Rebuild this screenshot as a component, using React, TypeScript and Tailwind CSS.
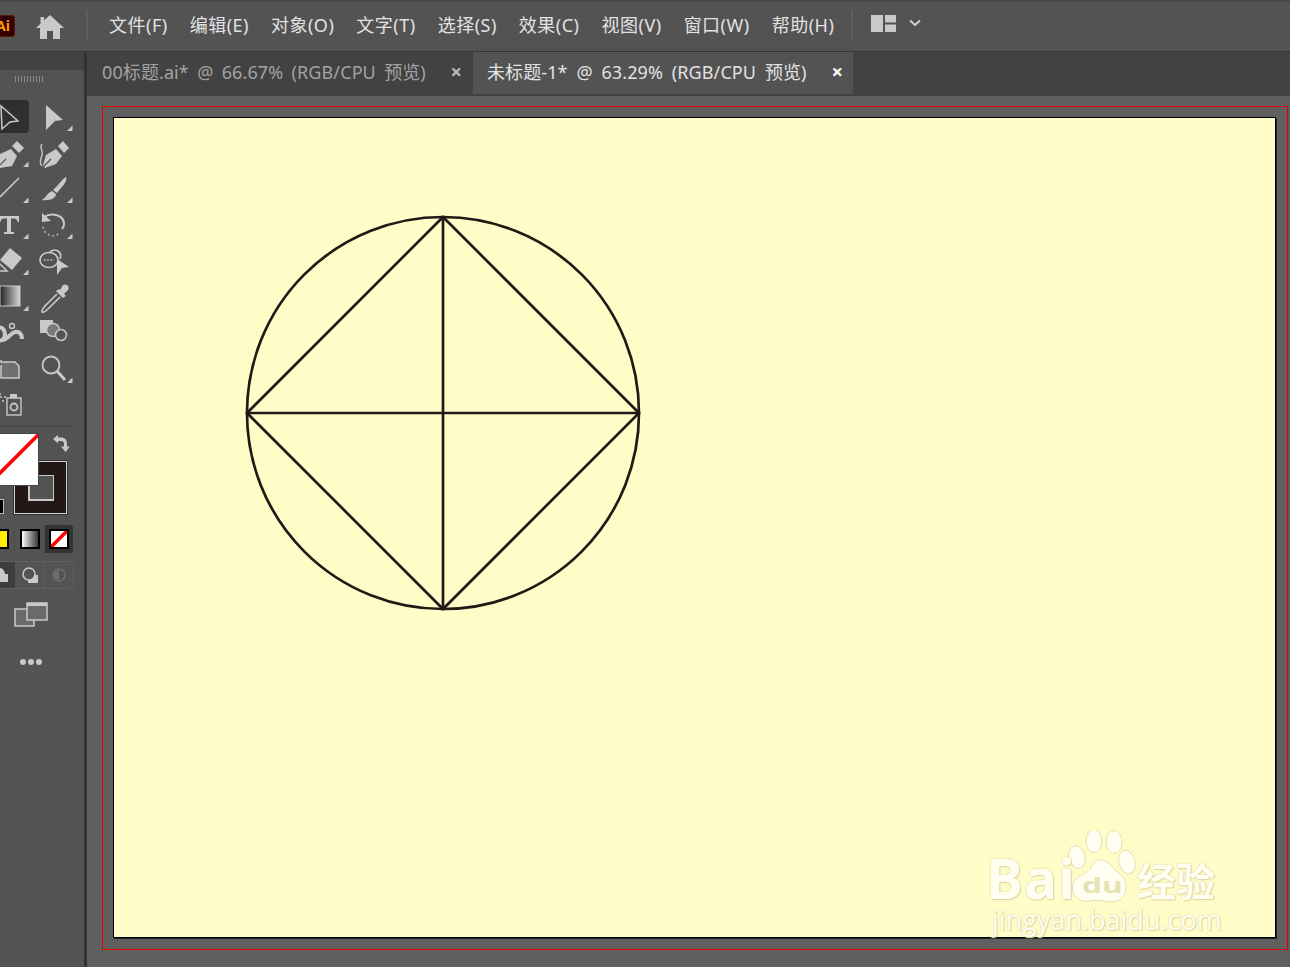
import { ReactNode } from 'react';

const FONT = '"Noto Sans", "Noto Sans CJK SC", sans-serif';
const menus = ['文件(F)', '编辑(E)', '对象(O)', '文字(T)', '选择(S)', '效果(C)', '视图(V)', '窗口(W)', '帮助(H)'];

// celda de herramienta: 44x36, dibujada en coordenadas de la propia celda
function Tool({ children, flag, active }: { children: ReactNode; flag?: boolean; active?: boolean }) {
  return (
    <div className="w-[44px] h-[36px]">
      <svg width="44" height="36" viewBox="0 0 44 36" fill="#c9c9c9" stroke="none">
        {active && <rect x="0" y="1" width="41" height="33" rx="4" fill="#2f2f2f" />}
        {children}
        {flag && <path d="M35 32h5.5v-5.5z" />}
      </svg>
    </div>
  );
}

function Toolbox() {
  return (
    <div className="grid grid-cols-[44px_44px] -ml-[12px] pt-[12px]">
      <Tool active>
        <path d="M13 7L30 22L22 23L14 30Z" fill="none" stroke="#c9c9c9" strokeWidth="1.5" />
      </Tool>
      <Tool flag>
        <path d="M14 6L31 21L23 22L14 31Z" />
      </Tool>

      <Tool flag>
        <path d="M8 31L12 19L23 14L29 21L24 31L12 33Z" />
        <path d="M24 11L29 6L36 13L31 18Z" />
        <path d="M11 31L18 24" stroke="#535353" strokeWidth="1.2" />
      </Tool>
      <Tool>
        <path d="M11 30L14 20L24 14L30 21L24 29L13 33Z" />
        <path d="M26 11L31 6L37 13L32 18Z" />
        <path d="M12 31L19 24" stroke="#535353" strokeWidth="1.2" />
        <path d="M10 31C5 26 12 22 10 16C9 12 8 11 10 9" fill="none" stroke="#c9c9c9" strokeWidth="1.4" />
      </Tool>

      <Tool flag>
        <path d="M12 26L31 7" stroke="#c9c9c9" strokeWidth="1.6" />
      </Tool>
      <Tool flag>
        <path d="M34 6C35 8 34 12 29 17L25 22L21 19L26 14C29 10 32 7 34 6Z" />
        <path d="M20 20L24 23C24 27 18 30 10 29C14 27 15 22 20 20Z" />
      </Tool>

      <Tool flag>
        <path d="M11 9H31V15H29.500C29 12 28 11.500 26 11.500H23V25H26V27H16V25H19V11.500H16C14 11.500 13 12 12.500 15H11Z" />
      </Tool>
      <Tool flag>
        <path d="M12 10C20 5 32 8 32 17C32 19 31 21 30 22" fill="none" stroke="#c9c9c9" strokeWidth="2" />
        <path d="M10 6L10 15L19 14Z" />
        <path d="M11 20L13 25L17 28L22 29L27 27" fill="none" stroke="#c9c9c9" strokeWidth="1.6" strokeDasharray="1.6 3" />
      </Tool>

      <Tool flag>
        <path d="M22 5L34 15L24 27L12 17Z" />
        <path d="M12 21L19 28H10L8 25Z" fill="none" stroke="#c9c9c9" strokeWidth="1.5" />
      </Tool>
      <Tool>
        <ellipse cx="17" cy="17" rx="9" ry="7.500" fill="none" stroke="#c9c9c9" strokeWidth="1.6" />
        <path d="M17 10C22 4 31 8 28 16" fill="none" stroke="#c9c9c9" strokeWidth="1.6" />
        <path d="M12 17H22" stroke="#c9c9c9" strokeWidth="1.6" strokeDasharray="1.6 1.6" />
        <path d="M25 16L37 24L30 25L25 32Z" />
      </Tool>

      <Tool flag>
        <defs>
          <linearGradient id="grad" x1="0" x2="1" y1="0" y2="0">
            <stop offset="0" stopColor="#222" />
            <stop offset="1" stopColor="#d8d8d8" />
          </linearGradient>
        </defs>
        <rect x="12" y="7" width="20" height="20" fill="url(#grad)" stroke="#c9c9c9" />
      </Tool>
      <Tool>
        <path d="M31 6C35 4 38 8 36 11L32 15L34 17L31 19L24 12L27 10L28 11Z" />
        <path d="M25 15L13 27C11 30 9 31 10 33C12 34 14 32 16 30L28 18" fill="none" stroke="#c9c9c9" strokeWidth="1.600" />
      </Tool>

      <Tool>
        <g fill="none" stroke="#c9c9c9" strokeWidth="4">
          <path d="M10 13C15 11 17 16 17 20C17 24 13 26 10 26" />
          <path d="M14 25C20 25 22 18 27 17C31 16 34 19 34 24" />
          <circle cx="24" cy="11" r="2.500" strokeWidth="1.400" />
        </g>
      </Tool>
      <Tool>
        <rect x="8" y="5" width="13" height="13" />
        <circle cx="21" cy="15" r="6.500" fill="#7a7a7a" stroke="#c9c9c9" strokeWidth="1.500" />
        <circle cx="29" cy="20" r="5.500" fill="#535353" stroke="#c9c9c9" strokeWidth="1.500" />
      </Tool>

      <Tool>
        <path d="M13 9V12M13 14V27H31V15L27 11H13" fill="#6f6f6f" stroke="#c9c9c9" strokeWidth="1.500" />
      </Tool>
      <Tool flag>
        <circle cx="19" cy="14" r="8.500" fill="none" stroke="#c9c9c9" strokeWidth="1.800" />
        <path d="M25 20L33 29" stroke="#c9c9c9" strokeWidth="3" />
      </Tool>

      <Tool>
        <rect x="19" y="11" width="14" height="17" fill="none" stroke="#c9c9c9" strokeWidth="1.400" />
        <rect x="22" y="7" width="7" height="4" />
        <circle cx="26" cy="20" r="3.500" fill="none" stroke="#c9c9c9" strokeWidth="1.800" />
        <path d="M12 10H14M16 10H18M14 14H16M12 7H13" stroke="#c9c9c9" strokeWidth="1.300" />
      </Tool>
    </div>
  );
}

function FillStroke() {
  return (
    <div className="relative h-[90px] mt-[6px]">
      {/* trazo */}
      <div className="absolute left-[14px] top-[28px] w-[53px] h-[53px] bg-[#231815] border border-[#d0d0d0] shadow-[0_0_0_1px_#333] flex items-center justify-center">
        <div className="w-[26px] h-[26px] bg-[#535353] border border-[#c9c9c9] border-b-2 border-l-2" />
      </div>
      {/* relleno: sin color */}
      <div className="absolute -left-[14px] top-0 w-[53px] h-[53px] bg-white border border-[#444] overflow-hidden">
        <svg width="53" height="53" viewBox="0 0 53 53">
          <path d="M52 0L0 52" stroke="#f00" strokeWidth="3.500" />
        </svg>
      </div>
      <div className="absolute -left-[6px] top-[66px] w-[10px] h-[15px] bg-black border border-[#bbb]" />
      {/* intercambiar */}
      <svg className="absolute left-[52px] top-[1px]" width="19" height="19" viewBox="0 0 19 19" fill="#c9c9c9">
        <path d="M1 5L6 1V3.500H9C13 3.500 15 6 15 10V12.500H18L13.500 18L9 12.500H12V10C12 8 11 7 9 7H6V9.500Z" />
      </svg>
    </div>
  );
}

function ColorModes() {
  return (
    <div className="flex items-center h-[28px] -ml-[16px] mt-[2px]">
      <div className="w-[31px] h-[28px] flex items-center justify-center border-r border-[#4a4a4a]">
        <div className="w-[20px] h-[20px] bg-[#ffef00] border-2 border-black" />
      </div>
      <div className="w-[30px] h-[28px] flex items-center justify-center border-r border-[#4a4a4a]">
        <div className="w-[20px] h-[20px] border-2 border-black bg-linear-to-r from-white to-[#3a3a3a]" />
      </div>
      <div className="w-[28px] h-[28px] bg-[#333] rounded-r-[3px] flex items-center justify-center">
        <div className="w-[20px] h-[20px] border-2 border-black bg-white overflow-hidden">
          <svg width="16" height="16" viewBox="0 0 16 16">
            <path d="M16 0L0 16" stroke="#f00" strokeWidth="3.500" />
          </svg>
        </div>
      </div>
    </div>
  );
}

function DrawModes() {
  return (
    <div className="flex items-center h-[28px] -ml-[16px] mt-[8px] border border-[#5e5e5e] rounded-[3px] w-[90px]">
      <div className="w-[30px] h-full bg-[#3d3d3d] flex items-center justify-center shrink-0">
        <svg width="18" height="18" viewBox="0 0 18 18" fill="#c9c9c9">
          <circle cx="8" cy="8" r="6" />
          <rect x="6" y="8" width="11" height="8" />
        </svg>
      </div>
      <div className="w-[30px] h-full flex items-center justify-center border-r border-[#5e5e5e] shrink-0">
        <svg width="18" height="18" viewBox="0 0 18 18">
          <rect x="7" y="9" width="10" height="8" fill="#c9c9c9" />
          <circle cx="8" cy="8" r="6" fill="#535353" stroke="#c9c9c9" strokeWidth="1.500" />
        </svg>
      </div>
      <div className="w-[28px] h-full flex items-center justify-center shrink-0">
        <svg width="16" height="16" viewBox="0 0 16 16">
          <circle cx="8" cy="8" r="6" fill="none" stroke="#6e6e6e" strokeWidth="1.500" />
          <path d="M8 8V3A5 5 0 0 0 3 8A5 5 0 0 0 8 13Z" fill="#6e6e6e" />
        </svg>
      </div>
    </div>
  );
}

function LeftPanel() {
  return (
    <aside className="w-[84px] shrink-0 flex flex-col overflow-hidden bg-[#535353]">
      <div className="h-[18px] shrink-0 bg-[#424242]" />
      <div className="h-[18px] shrink-0 flex justify-center items-center pr-[26px]">
        <div className="w-[29px] h-[6px] bg-[repeating-linear-gradient(90deg,#8a8a8a_0_1px,transparent_1px_3px)]" />
      </div>
      <div className="-mt-[1px]">
        <Toolbox />
      </div>
      <div className="h-px bg-[#484848] mt-[3px] mr-[8px]" />
      <FillStroke />
      <ColorModes />
      <DrawModes />
      <div className="flex justify-center pr-[23px] mt-[13px]">
        <svg width="34" height="26" viewBox="0 0 34 26">
          <rect x="1" y="7" width="19" height="17" fill="#6a6a6a" stroke="#c9c9c9" strokeWidth="1.500" />
          <rect x="13" y="1" width="20" height="17" fill="#6a6a6a" stroke="#c9c9c9" strokeWidth="1.500" />
          <rect x="13" y="1" width="20" height="3" fill="#c9c9c9" />
        </svg>
      </div>
      <div className="flex justify-center gap-[2px] pr-[23px] mt-[31px]">
        <span className="w-[6px] h-[6px] rounded-full bg-[#c9c9c9]" />
        <span className="w-[6px] h-[6px] rounded-full bg-[#c9c9c9]" />
        <span className="w-[6px] h-[6px] rounded-full bg-[#c9c9c9]" />
      </div>
    </aside>
  );
}

function Watermark() {
  return (
    <div className="absolute left-[876px] top-[712px] w-[232px] h-[108px] text-[#fffef0] [text-shadow:0_0_2px_#cfcb98,1px_1px_1px_#e0dca8]">
      <svg className="absolute left-[64px] top-0" width="84" height="76" viewBox="0 0 84 76" fill="#fffef0" stroke="#e5e1b0">
        <ellipse cx="40" cy="11" rx="8" ry="11.500" />
        <ellipse cx="60" cy="12" rx="8" ry="11.500" />
        <ellipse cx="23" cy="27" rx="8" ry="11.500" transform="rotate(-15 23 27)" />
        <ellipse cx="73" cy="32" rx="8" ry="12" transform="rotate(-15 73 32)" />
        <path d="M47 30C56 30 58 39 67 45C76 52 73 72 58 72C50 72 46 69 36 71C25 73 16 65 19 54C22 44 35 45 37 37C39 32 43 30 47 30Z" />
      </svg>
      <span className="absolute -left-[4px] top-[10px] text-[55px] leading-[76px] font-bold font-['Open_Sans',sans-serif] tracking-[1px]">Bai</span>
      <span className="absolute left-[92px] top-[41px] text-[21px] leading-[28px] font-bold font-['Open_Sans',sans-serif] text-[#e6e2b4] [text-shadow:none] scale-x-150 origin-left">du</span>
      <span className="absolute left-[147px] top-[24px] text-[39px] leading-[50px] font-bold font-['Noto_Sans_CJK_SC',sans-serif]">经验</span>
      <span className="absolute left-[2px] top-[72px] text-[27px] leading-[36px] font-['Open_Sans',sans-serif] whitespace-nowrap">jingyan.baidu.com</span>
    </div>
  );
}

export default function App() {
  return (
    <div className="w-full h-screen overflow-hidden flex flex-col bg-[#535353]" style={{ fontFamily: FONT }}>
      {/* barra de menús */}
      <header className="h-[52px] shrink-0 flex items-center pb-[3px] bg-[#535353] border-t-2 border-t-[#474747] border-b border-b-[#333]">
        <div className="-ml-[9px] mt-[2px] w-[24px] h-[22px] bg-[#330000] rounded-[3px] border border-[#5a1c00] flex items-center justify-center text-[#ff9a00] text-[14px] font-bold leading-none shrink-0">
          Ai
        </div>
        <svg className="ml-[21px] mt-[3px] shrink-0" width="28" height="24" viewBox="0 0 28 24" fill="#c9c9c9">
          <path d="M14 0L28 13H24V24H17V16H11V24H4V13H0L4.500 8.800V2H8V5.500Z" />
        </svg>
        <div className="ml-[22px] w-[2px] h-[30px] bg-[#5e5e5e] shrink-0" />
        <nav className="ml-[21px] flex gap-[22px] text-[18px] leading-none tracking-[0.5px] text-[#e2e2e2] whitespace-nowrap">
          {menus.map((m) => (
            <span key={m}>{m}</span>
          ))}
        </nav>
        <div className="ml-[17px] w-[2px] h-[30px] bg-[#5e5e5e] shrink-0" />
        <svg className="ml-[18px] mb-[3px] shrink-0" width="25" height="17" viewBox="0 0 25 17" fill="#c9c9c9">
          <rect width="12" height="17" />
          <rect x="14" width="11" height="7.500" />
          <rect x="14" y="9.500" width="11" height="7.500" />
        </svg>
        <svg className="ml-[13px] mb-[4px] shrink-0" width="12" height="8" viewBox="0 0 12 8" fill="none" stroke="#d0d0d0" strokeWidth="2">
          <path d="M1 1.500L6 6L11 1.500" />
        </svg>
      </header>

      <div className="flex-1 flex min-h-0">
        <LeftPanel />
        <main className="flex-1 min-w-0 flex flex-col border-l-[3px] border-l-[#333]">
          {/* pestañas */}
          <div className="h-[44px] shrink-0 flex bg-[#424242] text-[18px] leading-none tracking-[0.1px] whitespace-nowrap">
            <div className="w-[386px] h-[42px] flex items-center justify-between pb-[3px] pl-[15px] pr-[11px] text-[#a2a2a2] [word-spacing:3.5px]">
              <span>00标题.ai* @ 66.67% (RGB/CPU 预览)</span>
              <span className="text-[20px] font-bold text-[#bdbdbd]">×</span>
            </div>
            <div className="w-[380px] h-[42px] flex items-center justify-between pb-[3px] pl-[14px] pr-[10px] bg-[#535353] text-[#e2e2e2] [word-spacing:4px]">
              <span>未标题-1* @ 63.29% (RGB/CPU 预览)</span>
              <span className="text-[20px] font-bold text-white">×</span>
            </div>
          </div>
          {/* lienzo */}
          <div className="flex-1 min-h-0 bg-[#5f5f5f] pt-[10px] pl-[15px] pr-[2px] pb-[17px]">
            <div className="h-full border border-[#e80000] pt-[10px] pl-[10px] pr-[11px] pb-[11px]">
              <div className="relative h-full bg-[#fffcc8] border border-black shadow-[1px_1px_0_#222]">
                <svg className="ml-[129px] mt-[95px]" width="400" height="400" viewBox="0 0 400 400" fill="none" stroke="#231815" strokeWidth="2.700">
                  <circle cx="200" cy="200" r="196" />
                  <path d="M200 4L396 200L200 396L4 200Z" />
                  <path d="M4 200H396M200 4V396" />
                </svg>
                <Watermark />
              </div>
            </div>
          </div>
        </main>
      </div>
    </div>
  );
}
